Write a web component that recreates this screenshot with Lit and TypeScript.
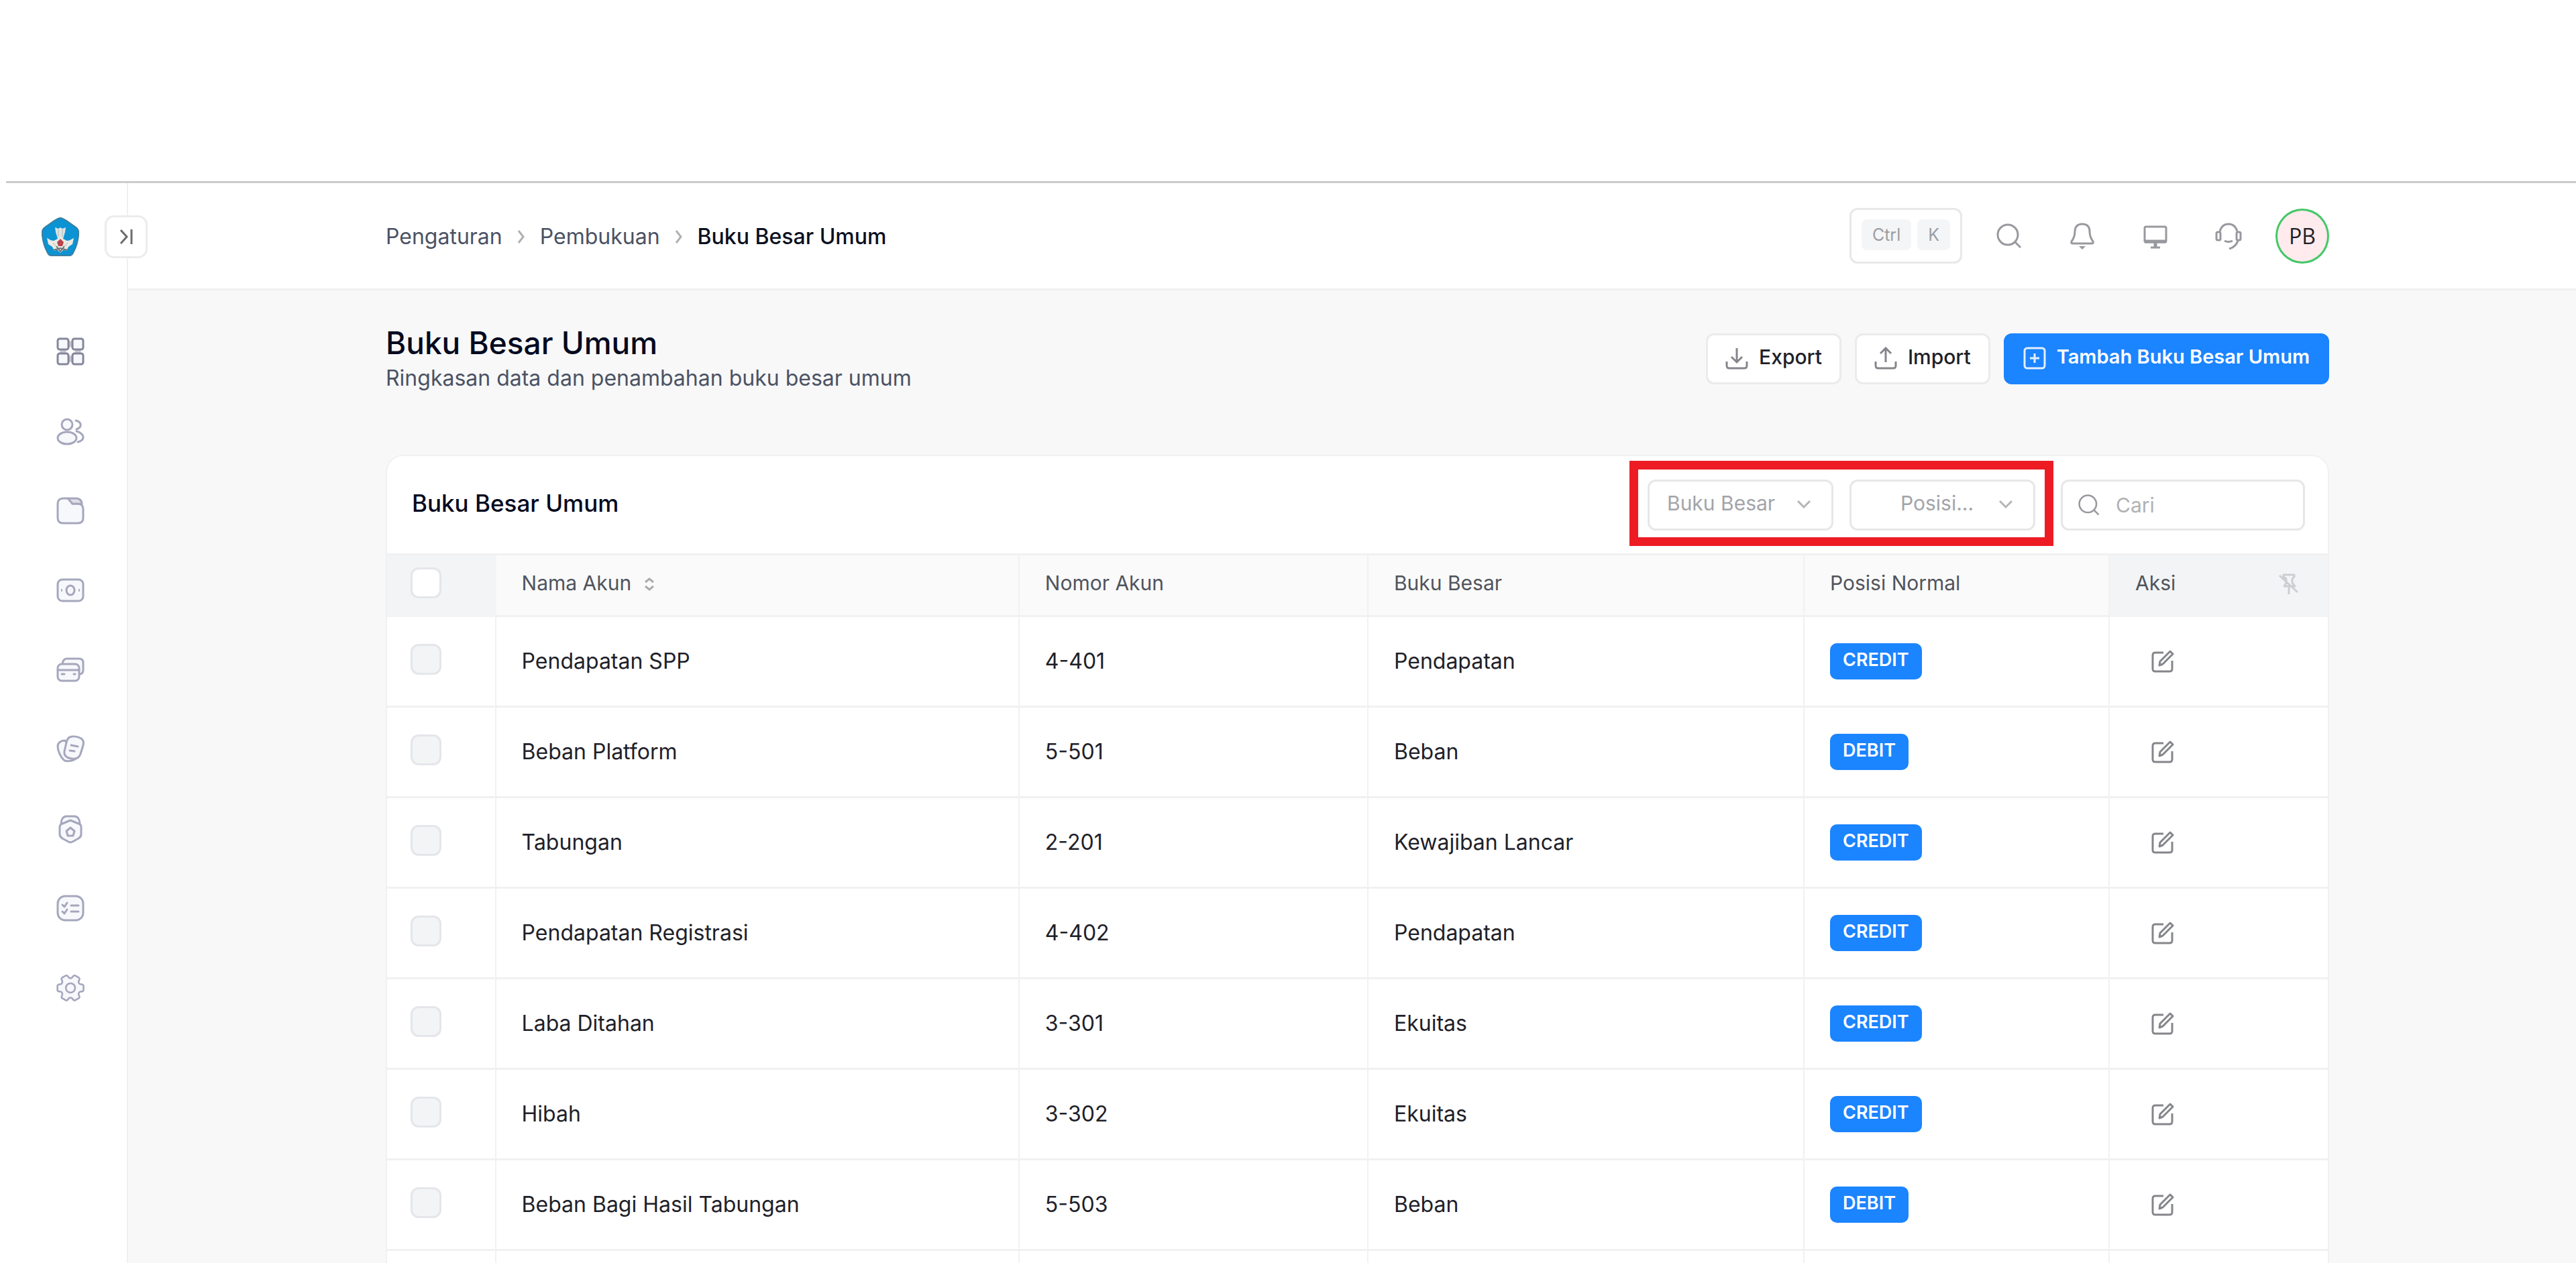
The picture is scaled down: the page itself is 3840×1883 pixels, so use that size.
import { LitElement, html, css, svg } from "lit";
import { customElement, property, state } from "lit/decorators.js";

interface Account {
  name: string;
  code: string;
  ledger: string;
  side: "CREDIT" | "DEBIT";
}

const ACCOUNTS: Account[] = [
  { name: "Pendapatan SPP", code: "4-401", ledger: "Pendapatan", side: "CREDIT" },
  { name: "Beban Platform", code: "5-501", ledger: "Beban", side: "DEBIT" },
  { name: "Tabungan", code: "2-201", ledger: "Kewajiban Lancar", side: "CREDIT" },
  { name: "Pendapatan Registrasi", code: "4-402", ledger: "Pendapatan", side: "CREDIT" },
  { name: "Laba Ditahan", code: "3-301", ledger: "Ekuitas", side: "CREDIT" },
  { name: "Hibah", code: "3-302", ledger: "Ekuitas", side: "CREDIT" },
  { name: "Beban Bagi Hasil Tabungan", code: "5-503", ledger: "Beban", side: "DEBIT" },
];

const GLYPHS = {
  grid: svg`
    <path d="M17 10h8M17 32h8M10 17v8M32 17v8" stroke="#c6c6cc" stroke-width="9" stroke-linecap="butt"/>
    <g stroke="#85879b"><rect x="2" y="2" width="16" height="16" rx="3"/><rect x="24" y="2" width="16" height="16" rx="3"/>
    <rect x="2" y="24" width="16" height="16" rx="3"/><rect x="24" y="24" width="16" height="16" rx="3"/></g>`,
  users: svg`
    <circle cx="16" cy="11" r="8"/><ellipse cx="16" cy="31" rx="14" ry="9"/>
    <path fill="none" d="M29 5c5 1 8 4 7 8-1 3-3 4-6 5M30 21c5 1 10 5 10 9s-4 6-8 7"/>`,
  folder: svg`
    <path d="M10 3h6c3 0 4 2 6 5l2 3h8c6 0 8 4 8 8v13c0 6-3 8-8 8H10c-6 0-8-3-8-8V11c0-5 3-8 8-8Z"/>
    <path d="M17 3h12c6 0 9 3 9 9-2-1-4-1-6-1h-8Z" fill="#dcdee8"/>`,
  cash: svg`
    <rect x="2" y="5" width="38" height="32" rx="7"/><ellipse cx="21" cy="21" rx="6" ry="7"/>
    <path d="M8 20v2M34 20v2" stroke-width="2"/>`,
  cards: svg`
    <path d="M9 12c1-5 3-7 7-7h18c4 0 6 2 6 6v11c0 4-2 6-6 6H12Z"/>
    <rect x="2" y="13" width="32" height="25" rx="6"/><path d="M2 22h32M8 28h4M26 28h2"/>`,
  tags: svg`
    <path d="M13 8C6 8 2 12 2 17c0 6 4 15 9 20 3 3 13 2 18-2Z"/>
    <path d="M20 3c5-2 12-1 17 2 3 2 4 6 3 10l-4 13c-2 6-7 8-13 7-8-1-12-5-11-11l3-13c1-4 2-7 5-8Z"/>
    <path d="M22 15l10 2M20 23l7 1"/>`,
  medal: svg`
    <path d="M7 13c0-6 3-11 8-11h12c5 0 8 5 8 11Z"/>
    <path d="M21 8l12 5c3 1 4 3 4 5v11c0 3-1 4-4 6l-9 5c-2 1-4 1-6 0l-9-5c-3-2-4-3-4-6V18c0-2 1-4 4-5Z"/>
    <path d="M21 19l6 5-2 7h-8l-2-7Z" stroke-width="3"/>`,
  tasks: svg`
    <rect x="2" y="3" width="38" height="36" rx="11"/>
    <path fill="none" d="M9 16l3 3 4-6M9 26l3 3 4-6M22 17h11M22 26h11"/>`,
  gear: svg`
    <g transform="rotate(90 21 21) translate(-5 -5) scale(2.16)" stroke-width="1.2"><path d="M9.594 3.94c.09-.542.56-.94 1.11-.94h2.593c.55 0 1.02.398 1.11.94l.213 1.281c.063.374.313.686.645.87.074.04.147.083.22.127.325.196.72.257 1.075.124l1.217-.456a1.125 1.125 0 0 1 1.37.49l1.296 2.247a1.125 1.125 0 0 1-.26 1.431l-1.003.827c-.293.241-.438.613-.43.992a7.723 7.723 0 0 1 0 .255c-.008.378.137.75.43.991l1.004.827c.424.35.534.955.26 1.43l-1.298 2.247a1.125 1.125 0 0 1-1.369.491l-1.217-.456c-.355-.133-.75-.072-1.076.124a6.47 6.47 0 0 1-.22.128c-.331.183-.581.495-.644.869l-.213 1.281c-.09.543-.56.94-1.11.94h-2.594c-.55 0-1.019-.398-1.11-.94l-.213-1.281c-.062-.374-.312-.686-.644-.87a6.52 6.52 0 0 1-.22-.127c-.325-.196-.72-.257-1.076-.124l-1.217.456a1.125 1.125 0 0 1-1.369-.49l-1.297-2.247a1.125 1.125 0 0 1 .26-1.431l1.004-.827c.292-.24.437-.613.43-.991a6.932 6.932 0 0 1 0-.255c.007-.38-.138-.751-.43-.992l-1.004-.827a1.125 1.125 0 0 1-.26-1.43l1.297-2.247a1.125 1.125 0 0 1 1.37-.491l1.216.456c.356.133.751.072 1.076-.124.072-.044.146-.086.22-.128.332-.183.582-.495.644-.869l.214-1.28Z"/><circle cx="12" cy="12" r="3.2"/></g>`,
};

type GlyphName = keyof typeof GLYPHS;

const MENU: { glyph: GlyphName; label: string }[] = [
  { glyph: "grid", label: "Dasbor" },
  { glyph: "users", label: "Pengguna" },
  { glyph: "folder", label: "Berkas" },
  { glyph: "cash", label: "Kas" },
  { glyph: "cards", label: "Pembayaran" },
  { glyph: "tags", label: "Tagihan" },
  { glyph: "medal", label: "Prestasi" },
  { glyph: "tasks", label: "Tugas" },
  { glyph: "gear", label: "Pengaturan" },
];

const searchIcon = svg`<circle cx="18" cy="18" r="15"/><path d="M29 29l8 8"/>`;

@customElement("side-menu")
class SideMenu extends LitElement {
  static styles = css`
    :host { display: block; position: relative; border-right: 2px solid #f0f0f1; background: #fff; }
    .brand { display: block; width: 54px; height: 58px; padding: 51px 0 0 62px; }
    .brand svg, .item svg, .toggle svg { display: block; }
    .toggle {
      position: absolute; top: 48px; right: -31px; width: 64px; height: 64px; z-index: 1;
      display: grid; place-items: center; padding: 0;
      border: 3px solid #ececed; border-radius: 14px; background: #fff;
    }
    .menu { list-style: none; margin: 83px 0 0; padding: 0; height: 1067px; display: grid; grid-auto-rows: 1fr; }
    .item { display: flex; align-items: center; height: 100%; padding-left: 84px; }
    .item svg { width: 42px; height: 42px; overflow: visible; fill: #f7f8fb; stroke: #a5a7bd; stroke-width: 3; stroke-linecap: round; stroke-linejoin: round; }
  `;

  render() {
    return html`
      <a class="brand" href="#" aria-label="Beranda">
        <svg width="56" height="58" viewBox="0 0 56 58">
          <path d="M28 1C32 1 35 4 40 7l10 7c5 3 6 7 5 13-1 10-4 19-8 26-1 3-3 4-6 4H15c-3 0-5-1-6-4C5 46 2 37 1 27c-1-6 0-10 5-13l10-7c5-3 8-6 12-6Z" fill="#0b93d4" stroke="#3d7f9f" stroke-width="2"/>
          <path d="M20 15l5 2 3-2 3 2 5-2-1 7-3 10h-8l-3-10Z" fill="#dfe4e4"/>
          <path d="M8 31c3 1 6 4 10 4l10-5 10 5c4 0 7-3 10-4l-2 9-6 4-3 6-4-2-5 5-5-5-4 2-3-6-6-4Z" fill="#eceae2"/>
          <path d="M28 32l5 5-2 6h-6l-2-6Z" fill="#b8454d"/>
          <path d="M17 49l11-3 11 3M22 43l6 8 6-8" fill="none" stroke="#6b7478" stroke-width="2"/>
          <path d="M25 18v11M31 18v11M17 38l5 6M39 38l-5 6" stroke="#a7b2b4"/>
        </svg>
      </a>
      <button class="toggle" type="button" aria-label="Buka menu">
        <svg width="20" height="24" viewBox="0 0 20 24" fill="none" stroke="#6c6c70" stroke-width="3"><path d="M2 2l9 10-9 10M18 1v22"/></svg>
      </button>
      <ul class="menu">
        ${MENU.map((m) => html`<li><a class="item" href="#" aria-label=${m.label}><svg viewBox="0 0 42 42">${GLYPHS[m.glyph]}</svg></a></li>`)}
      </ul>
    `;
  }
}

@customElement("top-bar")
class TopBar extends LitElement {
  static styles = css`
    :host {
      display: flex; justify-content: space-between; align-items: center;
      height: 157px; padding: 0 368px 0 384px; border-bottom: 3px solid #f0f0f1; background: #fff;
    }
    .crumbs { display: flex; align-items: center; gap: 22px; padding-top: 2px; font-size: 32px; line-height: 40px; }
    .crumbs a { color: #4b5264; text-decoration: none; }
    .crumbs svg { stroke: #b0b1b5; }
    .current { color: #0b0f1e; font-weight: 500; }
    .tools { display: flex; align-items: center; gap: 50px; }
    .icons { display: flex; gap: 69px; }
    button { font: inherit; padding: 0; border: 0; background: none; }
    svg { display: block; fill: none; stroke: #98999e; stroke-width: 3; }
    .shortcut {
      display: flex; gap: 9px; align-items: flex-start; padding: 14px 15px 17px;
      border: 3px solid #e8e8ea; border-radius: 12px; background: #fff;
    }
    kbd { min-width: 10px; padding: 0 16px; border-radius: 8px; background: #f4f5f6; color: #9b9da3; font: 25px/46px Inter, sans-serif; text-align: center; }
    .avatar {
      box-sizing: border-box; width: 80px; height: 82px; border: 3px solid #45c868; border-radius: 50%;
      background: #ffebed; color: #1e2129; font: 32px/40px "Open Sans", sans-serif;
    }
  `;

  render() {
    const chevron = html`<svg width="12" height="20" viewBox="0 0 12 20"><path d="M2 1l7 9-7 9"/></svg>`;
    return html`
      <nav class="crumbs" aria-label="Breadcrumb">
        <a href="#">Pengaturan</a>${chevron}<a href="#">Pembukuan</a>${chevron}<span class="current">Buku Besar Umum</span>
      </nav>
      <div class="tools">
        <button class="shortcut" type="button"><kbd>Ctrl</kbd><kbd>K</kbd></button>
        <div class="icons">
          <button type="button" aria-label="Cari"><svg width="40" height="40" viewBox="0 0 40 40">${searchIcon}</svg></button>
          <button type="button" aria-label="Notifikasi"><svg width="40" height="40" viewBox="0 0 40 40"><path d="M20 2c8 0 11 5 11 11 0 7 2 11 5 15 1 2 0 3-2 3H6c-2 0-3-1-2-3 3-4 5-8 5-15C9 7 12 2 20 2Z"/><path d="M15 35h10l-5 5Z" fill="#98999e" stroke="none"/></svg></button>
          <button type="button" aria-label="Layar"><svg width="40" height="40" viewBox="0 0 40 40"><rect x="4" y="6" width="32" height="23" rx="2"/><path d="M4 28h32M20 29v7" stroke-width="5"/><path d="M13 37h14"/></svg></button>
          <button type="button" aria-label="Bantuan"><svg width="40" height="40" viewBox="0 0 40 40"><path d="M7 13C9 6 13 2 20 2s11 4 13 11M34 27c-2 6-6 10-13 12M14 27c4 2 8 2 12 0"/><rect x="2" y="14" width="6" height="12" rx="2"/><rect x="32" y="14" width="6" height="12" rx="2"/></svg></button>
        </div>
        <button class="avatar" type="button">PB</button>
      </div>
    `;
  }
}

@customElement("ledger-table")
class LedgerTable extends LitElement {
  @property({ attribute: false }) rows: Account[] = [];

  static styles = css`
    :host { display: block; }
    table { width: 100%; table-layout: fixed; border-collapse: separate; border-spacing: 0; }
    .c-check { width: 5.62%; } .c-name { width: 26.97%; } .c-code { width: 17.98%; }
    .c-ledger { width: 22.47%; } .c-side { width: 15.73%; } .c-action { width: 11.23%; }
    th, td { box-sizing: border-box; padding: 0 36px 0 38px; text-align: left; border-bottom: 3px solid #f1f1f2; border-right: 2px solid #f1f1f2; }
    th:last-child, td:last-child { border-right: 0; }
    th { height: 92px; padding-bottom: 7px; background: #fafafa; color: #50545d; font-size: 30px; line-height: 40px; font-weight: 400; }
    th.pinned { background: #f2f4f6; border-color: #f2f4f6; }
    td { height: 135px; color: #1e2129; font-size: 32px; line-height: 40px; }
    th:first-child, td:first-child { padding-left: 35px; }
    td:first-child { padding-bottom: 7px; }
    .label { display: flex; align-items: center; gap: 20px; }
    .spread { justify-content: space-between; }
    .tick {
      appearance: none; display: block; box-sizing: border-box; width: 46px; height: 46px; margin: 0;
      border: 3px solid #e4e6ea; border-radius: 12px; background: #f2f4f6;
    }
    th .tick { background: #fff; }
    .badge {
      display: inline-block; vertical-align: middle; padding: 0 19px 4px; border-radius: 10px;
      background: #1b84ff; color: #fff; font-size: 27px; line-height: 50px; font-weight: 600;
    }
    .sort, .edit { display: block; padding: 0; border: 0; background: none; }
    .sort { padding-top: 4px; }
    .edit { margin-left: 24px; }
    svg { display: block; fill: none; stroke-linejoin: round; }
  `;

  render() {
    return html`
      <table>
        <colgroup>
          <col class="c-check" /><col class="c-name" /><col class="c-code" />
          <col class="c-ledger" /><col class="c-side" /><col class="c-action" />
        </colgroup>
        <thead>
          <tr>
            <th class="pinned"><input class="tick" type="checkbox" aria-label="Pilih semua" /></th>
            <th><div class="label">Nama Akun
              <button class="sort" type="button" aria-label="Urutkan"><svg width="14" height="20" viewBox="0 0 14 20" stroke="#abacb0" stroke-width="3"><path d="M1 7l6-5 6 5M1 13l6 5 6-5"/></svg></button></div></th>
            <th>Nomor Akun</th>
            <th>Buku Besar</th>
            <th>Posisi Normal</th>
            <th class="pinned"><div class="label spread">Aksi
              <svg width="38" height="36" viewBox="0 -4 38 36" stroke="#cdced2" stroke-width="3"><path d="M8 2h16v3l-3 3v6l4 5H9l3-5V8L8 5ZM16 19v12M2 3l27 25"/></svg></div></th>
          </tr>
        </thead>
        <tbody>
          ${this.rows.map((r) => html`
            <tr>
              <td><input class="tick" type="checkbox" aria-label=${r.name} /></td>
              <td>${r.name}</td>
              <td>${r.code}</td>
              <td>${r.ledger}</td>
              <td><span class="badge">${r.side}</span></td>
              <td><button class="edit" type="button" aria-label="Ubah ${r.name}">
                <svg width="34" height="34" viewBox="0 0 34 34" stroke="#85868b" stroke-width="3"><path d="M18 4H6C3 4 2 5 2 8v20c0 3 1 4 4 4h21c3 0 4-1 4-4V16"/><path d="M12 23l1-6L28 2l4 4-15 15Z"/></svg>
              </button></td>
            </tr>`)}
          <tr>${[1, 2, 3, 4, 5, 6].map(() => html`<td></td>`)}</tr>
        </tbody>
      </table>
    `;
  }
}

@customElement("app-root")
class AppRoot extends LitElement {
  @state() private query = "";

  static styles = css`
    :host { display: flex; flex-direction: column; height: 100vh; overflow: hidden; background: #fff; font-family: Inter, "Liberation Sans", sans-serif; }
    .blank { flex: none; height: 270px; margin-left: 9px; border-bottom: 3px solid #cbcbcb; }
    .shell { flex: 1; min-height: 0; display: grid; grid-template-columns: 191px 1fr; }
    .main { min-width: 0; background: #f8f8f8; }
    .content { padding: 52px 368px 0 384px; }
    .heading { display: flex; justify-content: space-between; align-items: center; margin-bottom: 94px; }
    h1 { margin: 0 0 7px; font-size: 46px; line-height: 52px; font-weight: 500; color: #050a20; }
    p { margin: 0; font-size: 32px; line-height: 40px; color: #4b5264; }
    .actions { display: flex; gap: 20px; }
    .btn {
      display: flex; align-items: center; gap: 16px; height: 76px; box-sizing: border-box; padding: 0 26px 6px;
      border: 3px solid #ebebed; border-radius: 12px; background: #fff; color: #1e2129; font: 500 30px/40px Inter, sans-serif;
    }
    .btn svg { display: block; margin-top: 4px; fill: none; stroke: #85868b; stroke-width: 3; }
    .primary { border-color: #1b84ff; background: #1b84ff; color: #fff; font-size: 29px; font-weight: 600; }
    .primary svg { stroke: #e2efff; }
    .card { border: 2px solid #f1f1f2; border-bottom: 0; border-radius: 26px 26px 0 0; overflow: hidden; background: #fff; }
    .bar { display: flex; justify-content: space-between; align-items: center; height: 145px; padding: 0 34px 0 37px; border-bottom: 3px solid #f1f1f2; }
    h2 { margin: 0; padding-bottom: 5px; font-size: 35px; line-height: 44px; font-weight: 500; color: #050a20; }
    .controls { display: flex; gap: 38px; }
    .filters { position: relative; display: flex; gap: 24px; }
    .filters::after { content: ""; position: absolute; inset: -28px -27px -23px; border: 13px solid #ed1c24; pointer-events: none; }
    .field { display: grid; align-items: center; }
    .field > * { grid-area: 1 / 1; }
    .field svg { fill: none; stroke: #98999e; stroke-width: 3; pointer-events: none; }
    .field .arrow { justify-self: end; margin-right: 34px; stroke: #b4b5b9; }
    .lens { margin-left: 25px; }
    select, input {
      appearance: none; box-sizing: border-box; height: 76px; margin: 0; border: 3px solid #e6e7e9; border-radius: 12px;
      background: #fff; color: #a3a4a9; font: 30px/40px Inter, sans-serif; outline: none;
    }
    select { width: 277px; padding: 0 0 5px 26px; }
    .indent { padding-left: 73px; }
    input { width: 364px; padding: 0 20px 0 79px; }
    input::placeholder { color: #b0b1b5; }
  `;

  render() {
    const arrow = html`<svg class="arrow" width="20" height="13" viewBox="0 0 20 13"><path d="M1 1l9 9 9-9"/></svg>`;
    return html`
      <div class="blank"></div>
      <div class="shell">
        <side-menu></side-menu>
        <div class="main">
          <top-bar></top-bar>
          <main class="content">
            <div class="heading">
              <div><h1>Buku Besar Umum</h1><p>Ringkasan data dan penambahan buku besar umum</p></div>
              <div class="actions">
                <button class="btn" type="button"><svg width="34" height="34" viewBox="0 0 34 34"><path d="M17 2v20M9 15l8 8 8-8M2 22v6c0 3 1 4 4 4h22c3 0 4-1 4-4v-6"/></svg>Export</button>
                <button class="btn" type="button"><svg width="34" height="34" viewBox="0 0 34 34"><path d="M17 23V2M9 10l8-8 8 8M2 22v6c0 3 1 4 4 4h22c3 0 4-1 4-4v-6"/></svg>Import</button>
                <button class="btn primary" type="button"><svg width="34" height="34" viewBox="0 0 34 34"><rect x="2" y="2" width="30" height="30" rx="4"/><path d="M17 10v14M10 17h14"/></svg>Tambah Buku Besar Umum</button>
              </div>
            </div>
            <section class="card">
              <div class="bar">
                <h2>Buku Besar Umum</h2>
                <div class="controls">
                  <div class="filters">
                    <div class="field"><select aria-label="Buku Besar"><option>Buku Besar</option></select>${arrow}</div>
                    <div class="field"><select class="indent" aria-label="Posisi"><option>Posisi...</option></select>${arrow}</div>
                  </div>
                  <div class="field">
                    <input type="search" aria-label="Cari" placeholder="Cari" .value=${this.query}
                      @input=${(e: Event) => { this.query = (e.target as HTMLInputElement).value; }} />
                    <svg class="lens" width="34" height="34" viewBox="0 0 40 40">${searchIcon}</svg>
                  </div>
                </div>
              </div>
              <ledger-table .rows=${ACCOUNTS}></ledger-table>
            </section>
          </main>
        </div>
      </div>
    `;
  }
}
